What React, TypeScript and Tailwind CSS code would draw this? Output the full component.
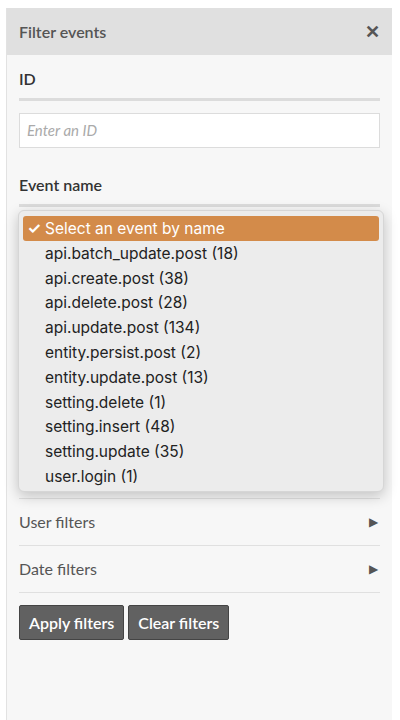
import React from "react";

const items = [
  "api.batch_update.post (18)",
  "api.create.post (38)",
  "api.delete.post (28)",
  "api.update.post (134)",
  "entity.persist.post (2)",
  "entity.update.post (13)",
  "setting.delete (1)",
  "setting.insert (48)",
  "setting.update (35)",
  "user.login (1)",
];

export default function App() {
  return (
    <div className="w-[400px] h-[720px] bg-white relative overflow-hidden" style={{ fontFamily: "Lato, sans-serif" }}>
      <div className="absolute left-[6px] top-[8px] w-[386px] h-[720px] bg-[#f7f7f7] border-l border-[#e2e2e2]">
        <div className="h-[47px] bg-[#e0e0e0] flex items-center justify-between px-[12px] text-[#555] text-[16px] font-semibold">
          <span>Filter events</span>
          <span className="text-[18px] text-[#555] font-bold">✕</span>
        </div>
        <div className="px-[12px]">
          <div className="pt-[12px] text-[16px] font-semibold text-[#333]">ID</div>
          <div className="mt-[7px] h-[3px] bg-[#dcdcdc]" />
          <div className="mt-[12px] h-[35px] bg-white border border-[#dcdcdc] flex items-center px-[7px] text-[15px] italic text-[#aaa]">Enter an ID</div>
          <div className="mt-[25px] text-[16px] font-semibold text-[#333]">Event name</div>
          <div className="mt-[7px] h-[3px] bg-[#dcdcdc]" />
          <div className="h-[291px]" />
          <div className="h-px bg-[#e0e0e0]" />
          <div className="h-[46px] flex items-center justify-between text-[16px] text-[#555]">
            <span>User filters</span>
            <span className="text-[12px] pr-[2px]">▶</span>
          </div>
          <div className="h-px bg-[#e0e0e0]" />
          <div className="h-[46px] flex items-center justify-between text-[16px] text-[#555]">
            <span>Date filters</span>
            <span className="text-[12px] pr-[2px]">▶</span>
          </div>
          <div className="h-px bg-[#e0e0e0]" />
          <div className="mt-[12px] flex gap-[4px]">
            <button className="h-[35px] px-[9px] bg-[#616161] border border-[#444] rounded-[2px] text-white text-[16px] font-semibold">Apply filters</button>
            <button className="h-[35px] px-[9px] bg-[#616161] border border-[#444] rounded-[2px] text-white text-[16px] font-semibold">Clear filters</button>
          </div>
        </div>
      </div>
      <div className="absolute left-[18px] top-[210px] w-[366px] h-[282px] bg-[#ececec] rounded-[6px] border border-[#d6d6d6] shadow-[0_4px_14px_rgba(0,0,0,0.22)] px-[4px] pt-[5px]" style={{ fontFamily: "Inter, sans-serif" }}>
        <div className="h-[25px] bg-[#d38b4a] rounded-[3px] flex items-center text-white text-[15.5px]">
          <span className="w-[22px] text-center font-bold">✓</span>Select an event by name
        </div>
        {items.map((t) => (
          <div key={t} className="h-[24.8px] flex items-center pl-[22px] text-[15.5px] text-[#222]">{t}</div>
        ))}
      </div>
    </div>
  );
}
